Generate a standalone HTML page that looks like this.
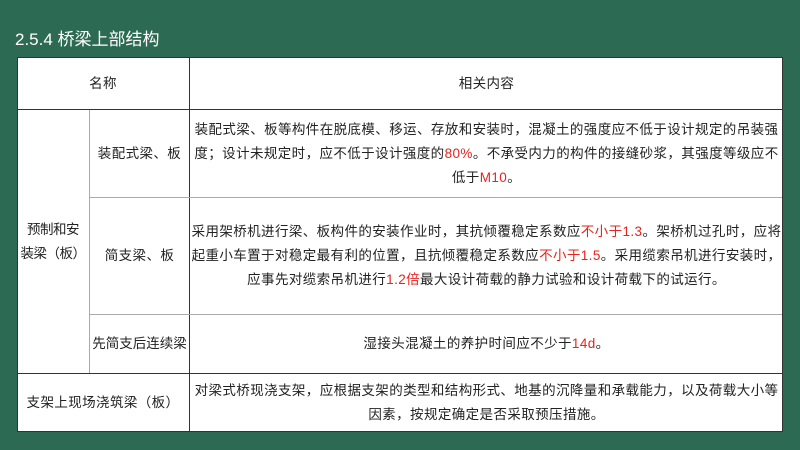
<!DOCTYPE html>
<html><head><meta charset="utf-8"><style>
body{margin:0;width:800px;height:450px;background:#2d6a53;position:relative;overflow:hidden;font-family:"Liberation Sans","Noto Sans CJK SC",sans-serif}
.t{position:absolute;left:15px;top:25px;color:#fff;font-size:17px}
.c{position:absolute;background:#fff;display:flex;align-items:center;justify-content:center;text-align:center;font-size:13.5px;letter-spacing:0.4px;color:#222;line-height:24px;box-sizing:border-box;white-space:nowrap}
.c>div{width:100%}
.r{color:#e8221d}
.l{position:absolute;background:#333}
.g{position:absolute;background:#aaa}
</style></head><body>
<div class="t">2.5.4 桥梁上部结构</div>
<div class="c" style="left:17px;top:57px;width:766px;height:375px"></div>
<div class="c" style="left:17px;top:58px;width:172px;height:51px"><div>名称</div></div>
<div class="c" style="left:190px;top:58px;width:593px;height:51px"><div>相关内容</div></div>
<div class="c" style="left:17px;top:110px;width:72px;height:263px;letter-spacing:-0.5px"><div>预制和安<br>装梁（板）</div></div>
<div class="c" style="left:90px;top:110px;width:99px;height:87px"><div>装配式梁、板</div></div>
<div class="c" style="left:190px;top:110px;width:593px;height:87px"><div>装配式梁、板等构件在脱底模、移运、存放和安装时，混凝土的强度应不低于设计规定的吊装强<br>度；设计未规定时，应不低于设计强度的<span class="r">80%</span>。不承受内力的构件的接缝砂浆，其强度等级应不<br>低于<span class="r">M10</span>。</div></div>
<div class="c" style="left:90px;top:198px;width:99px;height:116px"><div>简支梁、板</div></div>
<div class="c" style="left:190px;top:198px;width:593px;height:116px"><div>采用架桥机进行梁、板构件的安装作业时，其抗倾覆稳定系数应<span class="r">不小于1.3</span>。架桥机过孔时，应将<br>起重小车置于对稳定最有利的位置，且抗倾覆稳定系数应<span class="r">不小于1.5</span>。采用缆索吊机进行安装时，<br>应事先对缆索吊机进行<span class="r">1.2倍</span>最大设计荷载的静力试验和设计荷载下的试运行。</div></div>
<div class="c" style="left:90px;top:315px;width:99px;height:58px;letter-spacing:0"><div>先简支后连续梁</div></div>
<div class="c" style="left:190px;top:315px;width:593px;height:58px"><div>湿接头混凝土的养护时间应不少于<span class="r">14d</span>。</div></div>
<div class="c" style="left:17px;top:374px;width:172px;height:58px"><div>支架上现场浇筑梁（板）</div></div>
<div class="c" style="left:190px;top:374px;width:593px;height:58px"><div>对梁式桥现浇支架，应根据支架的类型和结构形式、地基的沉降量和承载能力，以及荷载大小等<br>因素，按规定确定是否采取预压措施。</div></div>
<div class="l" style="left:17px;top:57px;width:766px;height:1px"></div>
<div class="l" style="left:17px;top:109px;width:766px;height:1px"></div>
<div class="l" style="left:17px;top:373px;width:766px;height:1px"></div>
<div class="l" style="left:17px;top:431px;width:766px;height:1px"></div>
<div class="l" style="left:17px;top:57px;width:1px;height:375px"></div>
<div class="l" style="left:189px;top:57px;width:1px;height:375px"></div>
<div class="l" style="left:782px;top:57px;width:1px;height:375px"></div>
<div class="g" style="left:89px;top:110px;width:1px;height:263px"></div>
<div class="g" style="left:90px;top:197px;width:692px;height:1px"></div>
<div class="g" style="left:90px;top:314px;width:692px;height:1px"></div>
</body></html>
